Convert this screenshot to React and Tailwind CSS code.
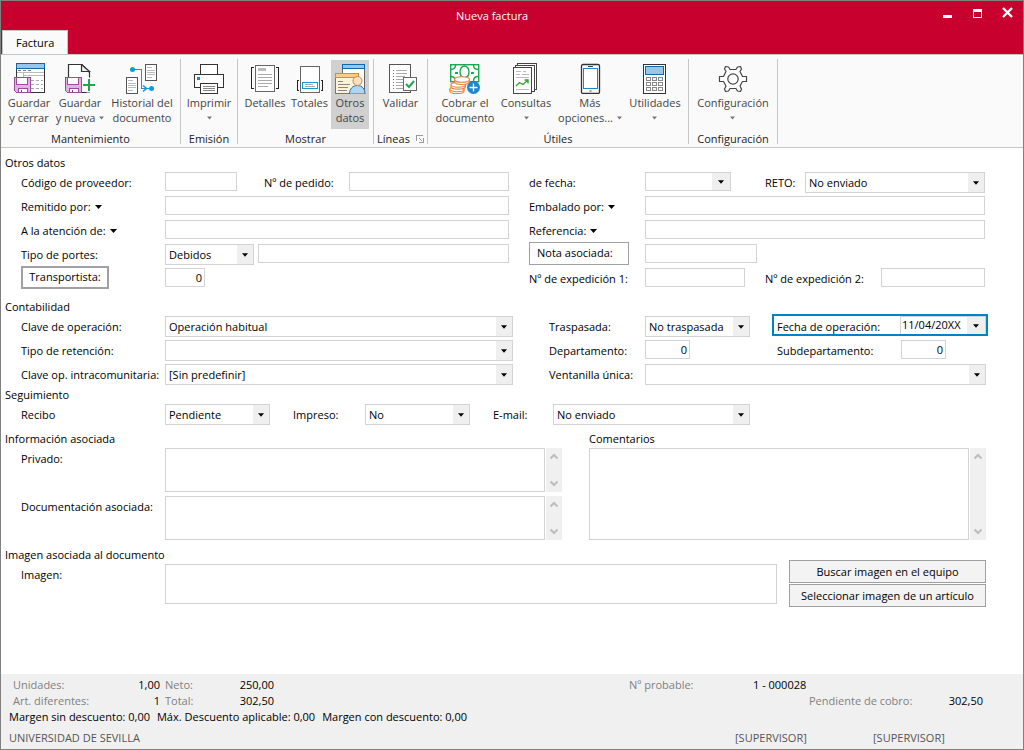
import { useId } from 'react';

// small drop-down triangle
function Caret({ className = 'text-black' }) {
  return (
    <svg width="7" height="4" viewBox="0 0 7 4" className={`inline-block shrink-0 ${className}`} aria-hidden="true">
      <path d="M0 0H7L3.5 4Z" fill="currentColor" />
    </svg>
  );
}

function Icon({ children }) {
  return (
    <svg width="32" height="32" viewBox="0 0 32 32" fill="none" className="block shrink-0" aria-hidden="true">
      {children}
    </svg>
  );
}

function Floppy() {
  return (
    <g shapeRendering="crispEdges">
      <path d="M1 15H16L18 17V31H3L1 29Z" fill="#dfb4dc" stroke="none" />
      <path d="M1.5 15.5H17.5V30.5H3.5L1.5 28.5Z" stroke="#9c4a9c" />
      <path d="M3.5 15.5H14.5V22.5H3.5Z" fill="#fff" stroke="#9c4a9c" />
      <path d="M5.5 26.5H14.5V30.5H5.5Z" fill="#fff" stroke="#9c4a9c" />
      <path d="M8 27.5V30" stroke="#555" />
    </g>
  );
}

const icons = {
  saveClose: (
    <Icon>
      <g shapeRendering="crispEdges">
        <rect x="3.5" y="1.5" width="28" height="29" fill="#fff" stroke="#333" />
        <rect x="3.5" y="1.5" width="28" height="5" fill="#92c8ef" stroke="#1466a8" />
        <path d="M5 8.5H8M10 8.5H13M15 8.5H18" stroke="#777" />
        <path d="M4 10.5H31M10.5 11V31M10 13.5H31" stroke="#bbb" />
        <path d="M18 18.5H21M23 18.5H26M28 18.5H30M18 22.5H21M23 22.5H26M28 22.5H30M18 26.5H21M23 26.5H26M28 26.5H30" stroke="#aaa" />
      </g>
      <Floppy />
    </Icon>
  ),
  saveNew: (
    <Icon>
      <path d="M4.5 30.5V2.5H18L25.5 10.5V30.5Z" fill="#fff" stroke="#333" strokeWidth="1.2" />
      <path d="M17.5 2.5V9.5H25.5L17.5 2.5" fill="#eee" stroke="#333" strokeWidth="1.2" />
      <Floppy />
      <path d="M25 15.5V30.5M18.5 23H32" stroke="#fafafa" strokeWidth="5" />
      <path d="M25 17V29M19 23H31" stroke="#1aa84e" strokeWidth="2" />
    </Icon>
  ),
  history: (
    <Icon>
      <g shapeRendering="crispEdges">
        <rect x="19.5" y="2.5" width="11" height="16" fill="#fff" stroke="#555" />
        <path d="M21 5.5H26M21 8.5H29M21 10.5H29M21 12.5H29M21 15.5H26" stroke="#bbb" />
        <rect x=".5" y="15.5" width="11" height="16" fill="#fff" stroke="#555" />
        <path d="M2 18.5H7M2 21.5H10M2 23.5H10M2 25.5H10M2 28.5H7" stroke="#bbb" />
        <path d="M6 7.5H15.5V26.5H24" stroke="#0a9be0" />
      </g>
      <circle cx="6.5" cy="7.5" r="2.5" fill="#0a9be0" />
      <circle cx="25.5" cy="26.5" r="2.5" fill="#0a9be0" />
      <path d="M17 23.5L20.5 26.5L17 29.5" stroke="#0a9be0" strokeWidth="1.6" />
    </Icon>
  ),
  print: (
    <Icon>
      <g shapeRendering="crispEdges">
        <path d="M7.5 12V2.5H24.5V12" fill="#fff" stroke="#333" />
        <rect x="1.5" y="12.5" width="29" height="13" fill="#fff" stroke="#333" />
        <rect x="4" y="15" width="3" height="3" fill="#1e86cc" />
        <rect x="7.5" y="21.5" width="17" height="10" fill="#fff" stroke="#333" />
        <path d="M10 24.5H22M10 26.5H22M10 28.5H22" stroke="#888" />
      </g>
    </Icon>
  ),
  details: (
    <Icon>
      <g shapeRendering="crispEdges">
        <path d="M5 5.5H2.5V26.5H5M27 5.5H29.5V26.5H27" stroke="#222" />
        <rect x="6.5" y="3.5" width="19" height="26" fill="#fff" stroke="#666" />
        <rect x="9" y="6" width="8" height="3" fill="#bbb" />
        <path d="M9 12.5H23M9 15.5H23M9 18.5H23M9 21.5H23M9 24.5H19" stroke="#aaa" />
      </g>
    </Icon>
  ),
  totals: (
    <Icon>
      <g shapeRendering="crispEdges">
        <rect x="6.5" y="4.5" width="19" height="26" fill="#fff" stroke="#666" />
        <path d="M5 18.5H3.5V28.5H5M27 18.5H28.5V28.5H27" stroke="#222" />
        <rect x="8.5" y="20.5" width="15" height="6" fill="#fff" stroke="#0a9be0" />
        <path d="M11 22.5H19M11 24.5H21" stroke="#aaa" />
      </g>
    </Icon>
  ),
  otherData: (
    <Icon>
      <g shapeRendering="crispEdges">
        <rect x="8.5" y="2.5" width="22" height="27" fill="#fff" stroke="#666" />
        <rect x="8.5" y="2.5" width="22" height="4" fill="#92c8ef" stroke="#1466a8" />
        <rect x="1.5" y="11.5" width="23" height="20" fill="#fdf1d8" stroke="#777" />
        <rect x="1.5" y="11.5" width="23" height="4" fill="#f7cd85" stroke="#dd8a2e" />
        <path d="M4 19.5H9M4 22.5H16M4 25.5H14M4 28.5H13" stroke="#888" />
      </g>
      <path d="M15.5 32C15.5 27 18.5 23.5 23.5 23.5S31 27 31 32Z" fill="#aed5f2" stroke="#1e78b8" />
      <circle cx="23.5" cy="19" r="4.5" fill="#fde0c0" stroke="#c98850" />
    </Icon>
  ),
  validate: (
    <Icon>
      <g shapeRendering="crispEdges">
        <rect x="4.5" y="2.5" width="21" height="28" fill="#fff" stroke="#555" />
        <path d="M8 8.5H9M8 14.5H9M8 20.5H9M8 26.5H9" stroke="#1aa84e" />
        <path d="M8 11.5H9M8 17.5H9M8 23.5H9" stroke="#d03030" />
        <path d="M11 8.5H22M11 11.5H22M11 14.5H20M11 17.5H18M11 20.5H18M11 23.5H18M11 26.5H18" stroke="#aaa" />
        <rect x="18.5" y="15.5" width="13" height="13" fill="#fff" stroke="#666" />
      </g>
      <path d="M21 22L24 25L29 19" stroke="#1aa84e" strokeWidth="2" />
    </Icon>
  ),
  collect: (
    <Icon>
      <rect x="1.7" y="2.7" width="28" height="17" fill="#fff" stroke="#1aa84e" strokeWidth="1.4" />
      <path d="M2 7.5C5 7.5 6.5 6 6.5 3M29 7.5C26 7.5 24.5 6 24.5 3M29 14.5C26 14.5 24.5 16 24.5 19M2 14.5C4 14.5 5.5 15.5 6 17" stroke="#1aa84e" strokeWidth="1.4" />
      <ellipse cx="15.5" cy="10" rx="4.5" ry="6" stroke="#1aa84e" strokeWidth="1.4" />
      <path d="M6 11H9M22 11H25" stroke="#1aa84e" strokeWidth="2" />
      <g fill="#fff" stroke="#ea8040" strokeWidth="1.1">
        <path d="M.8 27.5V29C.8 32.5 15 32.5 15 29V27.5Z" />
        <ellipse cx="7.9" cy="27.3" rx="7.1" ry="2.4" />
        <path d="M2 23V24.5C2 28 16.5 28 16.5 24.5V23Z" />
        <ellipse cx="9.2" cy="22.8" rx="7.2" ry="2.4" />
        <path d="M5.5 18V19.5C5.5 23.5 20.5 23.5 20.5 19.5V18Z" />
        <ellipse cx="13" cy="17.5" rx="7.5" ry="2.8" />
      </g>
      <circle cx="24.5" cy="25.5" r="6.5" fill="#1e86cc" />
      <path d="M24.5 21.5V29.5M20.5 25.5H28.5" stroke="#fff" strokeWidth="1.4" />
    </Icon>
  ),
  queries: (
    <Icon>
      <g shapeRendering="crispEdges" stroke="#444" fill="#fff">
        <path d="M7.5 1.5H26.5V27.5H7.5Z" />
        <path d="M5.5 3.5H24.5V29.5H5.5Z" />
        <path d="M3.5 5.5H21.5V31.5H3.5Z" />
        <path d="M6 9.5H11M13 9.5H16M6 12.5H10M12 12.5H19M6 15.5H19M6 27.5H19" stroke="#bbb" />
      </g>
      <path d="M6 24L9.5 20.5L13 22.5L18 18M14.5 18H18V21.5" stroke="#35a035" strokeWidth="1.4" />
    </Icon>
  ),
  phone: (
    <Icon>
      <rect x="7.5" y="2.5" width="18" height="29" rx="1.5" fill="#fff" stroke="#333" strokeWidth="1.3" />
      <rect x="9.5" y="6.5" width="14" height="20" fill="#fff" stroke="#1e86cc" shapeRendering="crispEdges" />
      <path d="M14 4.5H19M15.5 29H17.5" stroke="#444" />
    </Icon>
  ),
  calculator: (
    <Icon>
      <g shapeRendering="crispEdges">
        <rect x="4.5" y="2.5" width="22" height="29" fill="#fff" stroke="#333" />
        <rect x="6.5" y="4.5" width="18" height="8" fill="#92c8ef" stroke="#1466a8" />
        <g stroke="#888">
          <path d="M7.5 15.5H11.5V18.5H7.5ZM13.5 15.5H17.5V18.5H13.5ZM19.5 15.5H23.5V18.5H19.5Z" />
          <path d="M7.5 20.5H11.5V23.5H7.5ZM13.5 20.5H17.5V23.5H13.5ZM19.5 20.5H23.5V23.5H19.5Z" />
          <path d="M7.5 25.5H11.5V28.5H7.5ZM13.5 25.5H17.5V28.5H13.5ZM19.5 25.5H23.5V28.5H19.5Z" />
        </g>
      </g>
    </Icon>
  ),
  gear: (
    <Icon>
      <path
        d="M8.5 4.5L11.5 5L13 7.5H19L20.5 5L23.5 4.5L24.5 7L23 9.5L25.5 14.5H29.5V19.5H25.5L23 24L24.5 27L23.5 29.5L20.5 29L19 26.5H13L11.5 29L8.5 29.5L7.5 27L9 24L6.5 19.5H2.5V14.5H6.5L9 9.5L7.5 7Z"
        fill="#fff"
        stroke="#444"
        strokeWidth="1.2"
        strokeLinejoin="round"
      />
      <circle cx="16" cy="17" r="5.2" stroke="#444" strokeWidth="1.2" />
    </Icon>
  ),
};

function RibbonButton({ icon, lines, menu, active, className }) {
  const last = lines.length - 1;
  return (
    <button
      type="button"
      aria-pressed={active}
      className={`flex h-[69px] flex-col items-center gap-px pt-0.5 leading-[15px] whitespace-nowrap text-[#444] ${active ? 'bg-[#d0d0d0]' : ''} ${className}`}
    >
      {icons[icon]}
      <span className="flex flex-col items-center">
        {lines.map((line, i) => (
          <span key={line} className="flex items-center gap-1">
            {line}
            {menu && i === last && last > 0 && <Caret className="w-[5px] text-[#777]" />}
          </span>
        ))}
        {menu && last === 0 && (
          <span className="flex h-[15px] items-center">
            <Caret className="w-[5px] text-[#777]" />
          </span>
        )}
      </span>
    </button>
  );
}

function RibbonGroup({ title, children, className = '', rowClass = '', launcher }) {
  return (
    <section className={`mt-1 mb-[3px] flex h-[85px] flex-col border-r border-[#c6c6c6] pt-px ${className}`}>
      <div className={`flex ${rowClass}`}>{children}</div>
      <h2 className="mt-0.5 flex h-4 items-center justify-center gap-1.5 text-[#222]">
        {title}
        {launcher && (
          <button type="button" aria-label={`Opciones de ${title}`}>
            <svg width="8" height="8" viewBox="0 0 8 8" fill="none" stroke="#999" shapeRendering="crispEdges">
              <path d="M.5 6V.5H7M3 3L6 6M7.5 3V7.5H3" />
            </svg>
          </button>
        )}
      </h2>
    </section>
  );
}

const boxStyle = 'min-w-0 border border-[#d3d3d3] bg-white outline-none';

function Label({ className = '', children, ...props }) {
  return (
    <label className={`shrink-0 leading-[22px] whitespace-nowrap ${className}`} {...props}>
      {children}
    </label>
  );
}

function MenuLabel({ className, children, htmlFor }) {
  return (
    <Label className={`flex items-center gap-1 ${className}`} htmlFor={htmlFor}>
      {children}
      <Caret />
    </Label>
  );
}

function Input({ className = '', ...props }) {
  return <input type="text" className={`${boxStyle} h-[19px] px-0.5 ${className}`} {...props} />;
}

function Select({ id, value = '', className = '' }) {
  return (
    <span className={`relative flex min-w-0 ${className}`}>
      <select id={id} className={`${boxStyle} h-[21px] w-full appearance-none pt-0.5 pr-4 pl-[3px]`}>
        <option>{value}</option>
      </select>
      <span className="pointer-events-none absolute inset-y-px right-px flex w-4 items-center justify-center bg-[#efefef]">
        <Caret className="w-[6px]" />
      </span>
    </span>
  );
}

function DateInput({ id, value = '', className = '' }) {
  return (
    <span className={`flex h-[19px] border border-[#d3d3d3] bg-white ${className}`}>
      <input id={id} type="text" defaultValue={value} className="min-w-0 flex-1 pl-px outline-none" />
      <button type="button" aria-label="Abrir calendario" className="flex w-[18px] items-center justify-center bg-[#efefef]">
        <Caret className="w-[6px]" />
      </button>
    </span>
  );
}

function Field({ label, children, labelClass = 'w-36', menu, className = '' }) {
  const id = useId();
  const Tag = menu ? MenuLabel : Label;
  return (
    <div className={`flex min-w-0 items-start ${className}`}>
      <Tag htmlFor={id} className={labelClass}>{label}</Tag>
      {children(id)}
    </div>
  );
}

function MemoBox({ id, className, label }) {
  return (
    <div className={`flex min-w-0 flex-1 gap-px ${className}`}>
      <textarea id={id} aria-label={label} className={`${boxStyle} h-full flex-1 resize-none overflow-hidden`} />
      <div className="flex w-4 flex-col items-center justify-between bg-[#f0f0f0] py-[5px]">
        <svg width="8" height="7" viewBox="0 0 8 7" fill="none" stroke="#bdbdbd" strokeWidth="2">
          <path d="M.5 5.5L4 2L7.5 5.5" />
        </svg>
        <svg width="8" height="7" viewBox="0 0 8 7" fill="none" stroke="#bdbdbd" strokeWidth="2">
          <path d="M.5 1.5L4 5L7.5 1.5" />
        </svg>
      </div>
    </div>
  );
}

function SectionTitle({ children }) {
  return <h2 className="h-4 leading-[14px] whitespace-nowrap">{children}</h2>;
}

function TitleBar() {
  return (
    <header className="grid grid-cols-[1fr_auto_1fr] bg-[#c8002d] text-white">
      <div className="flex items-end pt-[29px] pl-px">
        <button type="button" className="h-6 border border-b-0 border-[#c6c6c6] bg-[#fafafa] px-[13px] pt-0.5 text-black">
          Factura
        </button>
      </div>
      <h1 className="pt-1.5 pr-10 leading-[18px]">Nueva factura</h1>
      <div className="flex items-start justify-end gap-[19px] pt-1.5 pr-[10px]">
        <button type="button" aria-label="Minimizar">
          <svg width="11" height="11" viewBox="0 0 11 11"><path d="M1 8H10V11H1Z" fill="#fff" /></svg>
        </button>
        <button type="button" aria-label="Maximizar">
          <svg width="11" height="11" viewBox="0 0 11 11"><path d="M1 2H10V11H1ZM2 5V10H9V5Z" fill="#fff" fillRule="evenodd" /></svg>
        </button>
        <button type="button" aria-label="Cerrar">
          <svg width="11" height="11" viewBox="0 0 11 11"><path d="M1 1L10 10M10 1L1 10" stroke="#fff" strokeWidth="2.4" /></svg>
        </button>
      </div>
    </header>
  );
}

function Ribbon() {
  return (
    <nav className="flex border-y border-[#c6c6c6] bg-[#fafafa]">
      <RibbonGroup title="Mantenimiento" className="w-[180px]" rowClass="pl-[3px]">
        <RibbonButton icon="saveClose" lines={['Guardar', 'y cerrar']} className="w-[50px]" />
        <RibbonButton icon="saveNew" lines={['Guardar', 'y nueva']} menu className="w-[52px]" />
        <RibbonButton icon="history" lines={['Historial del', 'documento']} className="w-[72px]" />
      </RibbonGroup>
      <RibbonGroup title="Emisión" className="w-[57px]">
        <RibbonButton icon="print" lines={['Imprimir']} menu className="w-full" />
      </RibbonGroup>
      <RibbonGroup title="Mostrar" className="w-[136px]" rowClass="pl-1">
        <RibbonButton icon="details" lines={['Detalles']} className="w-[46px]" />
        <RibbonButton icon="totals" lines={['Totales']} className="w-[43px]" />
        <RibbonButton icon="otherData" lines={['Otros', 'datos']} active className="w-[38px]" />
      </RibbonGroup>
      <RibbonGroup title="Líneas" launcher className="w-[54px]">
        <RibbonButton icon="validate" lines={['Validar']} className="w-full" />
      </RibbonGroup>
      <RibbonGroup title="Útiles" className="w-[261px]" rowClass="pl-1.5">
        <RibbonButton icon="collect" lines={['Cobrar el', 'documento']} className="w-[62px]" />
        <RibbonButton icon="queries" lines={['Consultas']} menu className="w-[60px]" />
        <RibbonButton icon="phone" lines={['Más', 'opciones...']} menu className="w-[68px]" />
        <RibbonButton icon="calculator" lines={['Utilidades']} menu className="w-[62px]" />
      </RibbonGroup>
      <RibbonGroup title="Configuración" className="w-[89px]">
        <RibbonButton icon="gear" lines={['Configuración']} menu className="w-full" />
      </RibbonGroup>
    </nav>
  );
}

function OtherData() {
  return (
    <section>
      <SectionTitle>Otros datos</SectionTitle>
      <div className="grid grid-cols-[minmax(0,488fr)_minmax(0,456fr)] gap-x-5 pr-px pl-4">
        <div className="grid auto-rows-[24px] grid-cols-1">
          <div className="flex">
            <Field label="Código de proveedor:">{(id) => <Input id={id} className="w-[72px]" />}</Field>
            <Field label="Nº de pedido:" labelClass="w-[85px]" className="flex-1 pl-[27px]">
              {(id) => <Input id={id} className="flex-1" />}
            </Field>
          </div>
          <Field label="Remitido por:" menu>{(id) => <Input id={id} className="flex-1" />}</Field>
          <Field label="A la atención de:" menu>{(id) => <Input id={id} className="flex-1" />}</Field>
          <Field label="Tipo de portes:">
            {(id) => (
              <>
                <Select id={id} value="Debidos" className="w-[89px]" />
                <Input aria-label="Descripción de portes" className="ml-1 flex-1" />
              </>
            )}
          </Field>
          <div className="flex items-start">
            <div className="-mt-0.5 w-36">
              <button type="button" className="h-[23px] w-[88px] border-2 border-[#a0a0a0]">Transportista:</button>
            </div>
            <Input aria-label="Transportista" defaultValue="0" className="w-10 text-right" />
          </div>
        </div>
        <div className="grid auto-rows-[24px] grid-cols-1">
          <div className="flex">
            <Field label="de fecha:" labelClass="w-[116px]">{(id) => <DateInput id={id} className="w-[86px]" />}</Field>
            <Field label="RETO:" labelClass="w-10" className="flex-1 pl-[34px]">
              {(id) => <Select id={id} value="No enviado" className="flex-1" />}
            </Field>
          </div>
          <Field label="Embalado por:" labelClass="w-[116px]" menu>{(id) => <Input id={id} className="flex-1" />}</Field>
          <Field label="Referencia:" labelClass="w-[116px]" menu>{(id) => <Input id={id} className="flex-1" />}</Field>
          <div className="flex items-start">
            <div className="-mt-0.5 w-[116px]">
              <button type="button" className="h-[23px] w-[100px] border border-[#a0a0a0] pl-[7px] text-left">Nota asociada:</button>
            </div>
            <Input aria-label="Nota asociada" className="w-[112px]" />
          </div>
          <div className="flex">
            <Field label="Nº de expedición 1:" labelClass="w-[116px]">{(id) => <Input id={id} className="w-[100px]" />}</Field>
            <Field label="Nº de expedición 2:" labelClass="w-[116px]" className="flex-1 pl-5">
              {(id) => <Input id={id} className="flex-1" />}
            </Field>
          </div>
        </div>
      </div>
    </section>
  );
}

function Accounting() {
  return (
    <section className="mt-2">
      <SectionTitle>Contabilidad</SectionTitle>
      <div className="grid grid-cols-[minmax(0,492fr)_minmax(0,437fr)] gap-x-9 pl-4">
        <div className="grid auto-rows-[24px] grid-cols-1">
          <Field label="Clave de operación:">{(id) => <Select id={id} value="Operación habitual" className="flex-1" />}</Field>
          <Field label="Tipo de retención:">{(id) => <Select id={id} className="flex-1" />}</Field>
          <Field label="Clave op. intracomunitaria:">{(id) => <Select id={id} value="[Sin predefinir]" className="flex-1" />}</Field>
        </div>
        <div className="grid auto-rows-[24px] grid-cols-1">
          <div className="flex items-start justify-between">
            <Field label="Traspasada:" labelClass="w-24">{(id) => <Select id={id} value="No traspasada" className="w-[105px]" />}</Field>
            <Field
              label="Fecha de operación:"
              labelClass="w-[123px]"
              className="h-[18px] pl-[3px] outline-2 outline-[#0082c8]"
            >
              {(id) => <DateInput id={id} value="11/04/20XX" className="w-[86px]" />}
            </Field>
          </div>
          <div className="flex items-start justify-between">
            <Field label="Departamento:" labelClass="w-24">{(id) => <Input id={id} defaultValue="0" className="w-[45px] text-right" />}</Field>
            <Field label="Subdepartamento:" labelClass="w-[124px]" className="pr-10">
              {(id) => <Input id={id} defaultValue="0" className="w-[45px] text-right" />}
            </Field>
          </div>
          <Field label="Ventanilla única:" labelClass="w-24">{(id) => <Select id={id} className="flex-1" />}</Field>
        </div>
      </div>
    </section>
  );
}

function Tracking() {
  return (
    <section>
      <SectionTitle>Seguimiento</SectionTitle>
      <div className="flex h-6 pl-4">
        <Field label="Recibo">{(id) => <Select id={id} value="Pendiente" className="w-[105px]" />}</Field>
        <Field label="Impreso:" labelClass="w-[72px]" className="pl-[23px]">
          {(id) => <Select id={id} value="No" className="w-[105px]" />}
        </Field>
        <Field label="E-mail:" labelClass="w-[60px]" className="pl-[23px]">
          {(id) => <Select id={id} value="No enviado" className="w-[197px]" />}
        </Field>
      </div>
    </section>
  );
}

function RelatedInfo() {
  return (
    <div className="mt-1 grid grid-cols-[minmax(0,557fr)_minmax(0,397fr)] gap-x-[27px]">
      <section>
        <SectionTitle>Información asociada</SectionTitle>
        <div className="grid auto-rows-[48px] grid-cols-1 pl-4">
          <Field label="Privado:">{(id) => <MemoBox id={id} className="h-11" />}</Field>
          <Field label="Documentación asociada:">{(id) => <MemoBox id={id} className="h-11" />}</Field>
        </div>
      </section>
      <section>
        <SectionTitle>Comentarios</SectionTitle>
        <MemoBox label="Comentarios" className="h-[92px]" />
      </section>
    </div>
  );
}

function DocumentImage() {
  const btn = 'h-[23px] border border-[#a0a0a0] bg-[#f3f3f3] pt-px';
  return (
    <div className="mt-1 flex gap-3">
      <section className="flex-1">
        <SectionTitle>Imagen asociada al documento</SectionTitle>
        <div className="flex pl-4">
          <span className="w-36 leading-[22px]">Imagen:</span>
          <div className="h-10 flex-1 border border-[#d3d3d3]" />
        </div>
      </section>
      <div className="flex w-[197px] flex-col gap-px pt-3">
        <button type="button" className={btn}>Buscar imagen en el equipo</button>
        <button type="button" className={btn}>Seleccionar imagen de un artículo</button>
      </div>
    </div>
  );
}

function StatusBar() {
  const gray = 'text-[#808080]';
  return (
    <footer className="bg-[#f0f0f0] pt-[3px] pb-[3px] pl-2 leading-4 whitespace-nowrap">
      <div className="flex justify-between pr-10 pl-1">
        <dl className="grid grid-cols-[92px_55px_60px_54px]">
          <dt className={gray}>Unidades:</dt>
          <dd className="text-right">1,00</dd>
          <dt className={`pl-[5px] ${gray}`}>Neto:</dt>
          <dd className="text-right">250,00</dd>
          <dt className={gray}>Art. diferentes:</dt>
          <dd className="text-right">1</dd>
          <dt className={`pl-[5px] ${gray}`}>Total:</dt>
          <dd className="text-right">302,50</dd>
        </dl>
        <dl className="grid grid-cols-[124px_56px_117px_57px]">
          <dt className={gray}>Nº probable:</dt>
          <dd className="col-span-3">1 - 000028</dd>
          <dt className={`col-start-3 ${gray}`}>Pendiente de cobro:</dt>
          <dd className="text-right">302,50</dd>
        </dl>
      </div>
      <p className="flex gap-[7px]">
        <span>Margen sin descuento: 0,00</span>
        <span>Máx. Descuento aplicable: 0,00</span>
        <span>Margen con descuento: 0,00</span>
      </p>
      <div className="mt-[5px] flex text-[#555]">
        <span className="flex-1">UNIVERSIDAD DE SEVILLA</span>
        <span className="w-[138px]">[SUPERVISOR]</span>
        <span className="w-[150px]">[SUPERVISOR]</span>
      </div>
    </footer>
  );
}

export default function App() {
  return (
    <div className="flex min-h-screen flex-col border border-[#808080] bg-white font-['Open_Sans','Noto_Sans',sans-serif] text-[11px] text-black">
      <TitleBar />
      <Ribbon />
      <main className="flex-1 pt-2 pr-[37px] pb-4 pl-1">
        <OtherData />
        <Accounting />
        <Tracking />
        <RelatedInfo />
        <DocumentImage />
      </main>
      <StatusBar />
    </div>
  );
}
